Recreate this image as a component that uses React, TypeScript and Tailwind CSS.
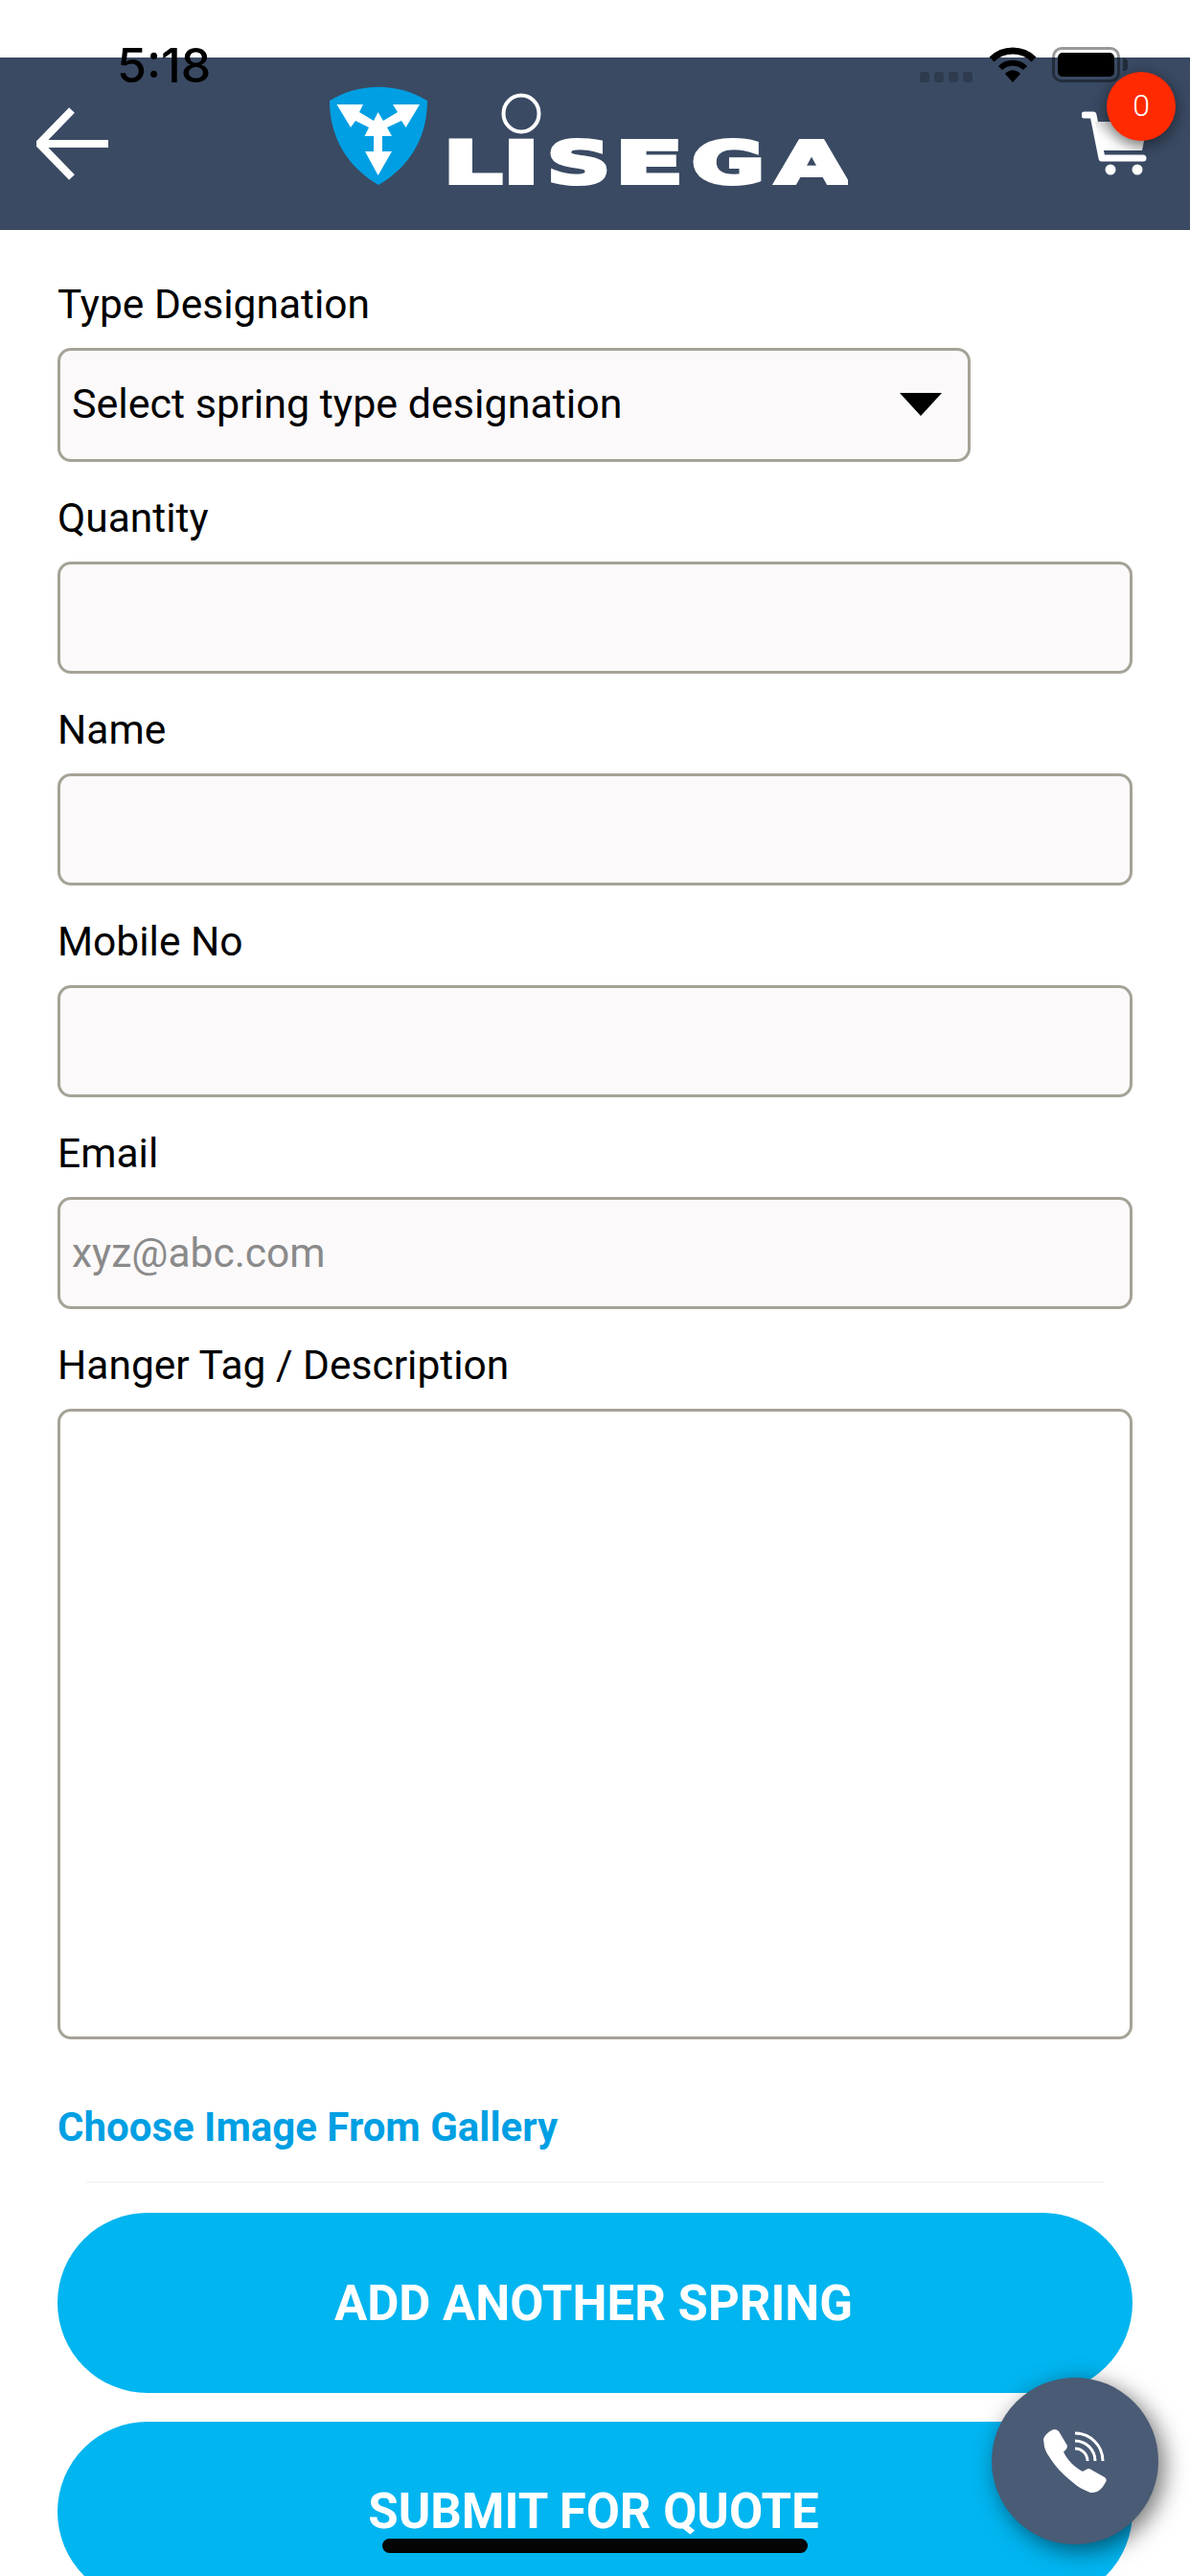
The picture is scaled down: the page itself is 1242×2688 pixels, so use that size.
import React from "react";

function StatusBar() {
  return (
    <div className="absolute left-0 top-0 w-full h-[100px] text-black">
      <span className="absolute left-[122px] top-[38px] font-['Inter',sans-serif] text-[50px] leading-[60px] font-medium">
        5:18
      </span>
      <div className="absolute left-[960px] top-[75px] flex gap-[5px]">
        <div className="w-[10px] h-[11px] rounded-[3px] bg-black/20" />
        <div className="w-[10px] h-[11px] rounded-[3px] bg-black/20" />
        <div className="w-[10px] h-[11px] rounded-[3px] bg-black/20" />
        <div className="w-[10px] h-[11px] rounded-[3px] bg-black/20" />
      </div>
      <svg className="absolute left-[1031px] top-[48px]" width="52" height="38" viewBox="0 0 52 38">
        <path d="M4 14C16 2 36 2 48 14" fill="none" stroke="#000" strokeWidth="7" />
        <path d="M13 23C20 16 32 16 39 23" fill="none" stroke="#000" strokeWidth="6" />
        <path d="M18 29C23 24 29 24 34 29L26 38Z" fill="#000" />
      </svg>
      <div className="absolute left-[1098px] top-[49px] w-[71px] h-[37px] rounded-[10px] border-[3px] border-black/40 p-[3px]">
        <div className="w-full h-full rounded-[5px] bg-black" />
      </div>
      <div className="absolute left-[1172px] top-[61px] w-[5px] h-[13px] rounded-r-[4px] bg-black/40" />
    </div>
  );
}

const logoLetters = [
  { ch: "L", x: 462, w: 61 },
  { ch: "I", x: 524, w: 38 },
  { ch: "S", x: 570, w: 66 },
  { ch: "E", x: 641, w: 71 },
  { ch: "G", x: 721, w: 76 },
  { ch: "A", x: 809, w: 74 },
];

function Logo() {
  return (
    <svg width="542" height="122" viewBox="342 90 542 122" className="ml-[229px] mt-[2px] shrink-0">
      <path d="M343 105C375 86 413 86 445 105C445 145 425 175 394 193C363 175 343 145 343 105Z" fill="#009fe3" />
      <polygon
        fill="#fff"
        points="350.5,109 378,109 374,117 389,126 393.6,117 399,126 414,117 409,109 437,109 422.6,133 418,126 403,133 408,142 398,142 398,158 408,158 393.6,183 380,158 389,158 389,142 379.5,142 384,133 370,126 365,133"
      />
      <ellipse cx="543" cy="118.5" rx="18.5" ry="19" fill="none" stroke="#fff" strokeWidth="4" />
      <text
        y="191"
        fill="#fff"
        stroke="#fff"
        strokeWidth="4"
        fontFamily="'DejaVu Sans', sans-serif"
        fontWeight="700"
        fontSize="60"
      >
        {logoLetters.map((l) => (
          <tspan key={l.x} x={l.x} textLength={l.w} lengthAdjust="spacingAndGlyphs">
            {l.ch}
          </tspan>
        ))}
      </text>
    </svg>
  );
}

function Header() {
  return (
    <div className="mt-[60px] h-[180px] bg-[#3a4a63] flex items-center relative">
      <svg width="76" height="76" viewBox="0 0 76 76" className="ml-[38px] shrink-0">
        <path d="M37 3L3 38L37 73M3 38H75" fill="none" stroke="#fff" strokeWidth="8" />
      </svg>
      <Logo />
      <svg width="70" height="70" viewBox="0 0 70 70" className="ml-[244px] shrink-0">
        <defs>
          <linearGradient id="basket" x1="0" y1="1" x2="1" y2="0">
            <stop offset="0.3" stopColor="#ffffff" />
            <stop offset="1" stopColor="#b5b5b5" />
          </linearGradient>
        </defs>
        <path d="M3 5H12L21 50H64" fill="none" stroke="#fff" strokeWidth="7" strokeLinecap="round" strokeLinejoin="round" />
        <path d="M14 12H69L63 42H20Z" fill="url(#basket)" />
        <circle cx="30" cy="62" r="5.5" fill="#fff" />
        <circle cx="58" cy="62" r="5.5" fill="#fff" />
      </svg>
      <div className="absolute left-[1155px] top-[15px] w-[72px] h-[72px] rounded-full bg-[#ff2a00] shadow-[0_4px_16px_rgba(0,0,0,0.5)] flex items-center justify-center text-white text-[32px] font-light pb-[3px]">
        0
      </div>
    </div>
  );
}

function Field({ label, children }: { label: string; children: React.ReactNode }) {
  return (
    <div className="flex flex-col gap-[21px]">
      <div className="text-[42.5px] leading-[48px] pt-[1px] text-black">{label}</div>
      {children}
    </div>
  );
}

function TextBox({ placeholder }: { placeholder?: string }) {
  return (
    <div className="h-[117px] rounded-[14px] border-[3px] border-[#a5a297] bg-[#fbf9fa] flex items-center pl-[12px] text-[42.5px] text-[#8a8a8a]">
      {placeholder}
    </div>
  );
}

function PhoneButton() {
  return (
    <div className="absolute left-[1035px] top-[2481px] w-[174px] h-[174px] rounded-full bg-[#4a5b75] shadow-[6px_6px_24px_rgba(0,0,0,0.55)] flex items-center justify-center">
      <svg width="66" height="66" viewBox="0 0 66 66">
        <path
          d="M0 10C2 5 7 1 11 0C14 0 15 1 16 2L25 17C25 20 23 22 21 23.5C25 32 33 40 41 44C43 43 45 41 48 41L64 50C66 52 66 53 65 55C62 60 60 63 56 65C53 66 51 66 49 66C43 63 37 61 32.7 57C24 50 15 42 9 33C5 27 2 23 1 18Z"
          fill="#fff"
        />
        <path d="M33 4A29 29 0 0 1 62 33M33 12A21 21 0 0 1 54 33M33 20A13 13 0 0 1 46 33" fill="none" stroke="#fff" strokeWidth="3" />
      </svg>
    </div>
  );
}

export default function App() {
  return (
    <div className="relative w-[1242px] h-[2688px] overflow-hidden bg-white font-['Roboto',sans-serif]">
      <Header />
      <div className="px-[60px] pt-[53px] flex flex-col">
        <div className="flex flex-col gap-[34px]">
          <Field label="Type Designation">
            <div className="w-[953px] h-[119px] rounded-[14px] border-[3px] border-[#a5a297] bg-[#fbf9fa] flex items-center justify-between pl-[12px] pr-[27px] pb-[2px] text-[43px] text-black">
              <span>Select spring type designation</span>
              <svg width="44" height="24" viewBox="0 0 44 24">
                <polygon points="0,0 44,0 22,24" fill="#000" />
              </svg>
            </div>
          </Field>
          <Field label="Quantity">
            <TextBox />
          </Field>
          <Field label="Name">
            <TextBox />
          </Field>
          <Field label="Mobile No">
            <TextBox />
          </Field>
          <Field label="Email">
            <TextBox placeholder="xyz@abc.com" />
          </Field>
          <Field label="Hanger Tag / Description">
            <div className="h-[658px] rounded-[14px] border-[3px] border-[#a5a297] bg-white" />
          </Field>
        </div>
        <div className="mt-[68px] text-[42px] leading-[48px] font-bold text-[#009fe3]">
          Choose Image From Gallery
        </div>
        <div className="mt-[32px] mx-[30px] h-[2px] bg-[#f6f6f6]" />
        <div className="mt-[31px] h-[188px] rounded-full bg-[#00b5f0] flex items-center justify-center pr-[3px] pt-[2px] text-white text-[51px] font-bold">
          ADD ANOTHER SPRING
        </div>
        <div className="mt-[30px] h-[188px] shrink-0 rounded-full bg-[#00b5f0] flex items-center justify-center pr-[3px] text-white text-[51px] font-bold">
          SUBMIT FOR QUOTE
        </div>
      </div>
      <StatusBar />
      <PhoneButton />
      <div className="absolute left-[399px] top-[2649px] w-[444px] h-[15px] rounded-full bg-[#050505]" />
    </div>
  );
}
